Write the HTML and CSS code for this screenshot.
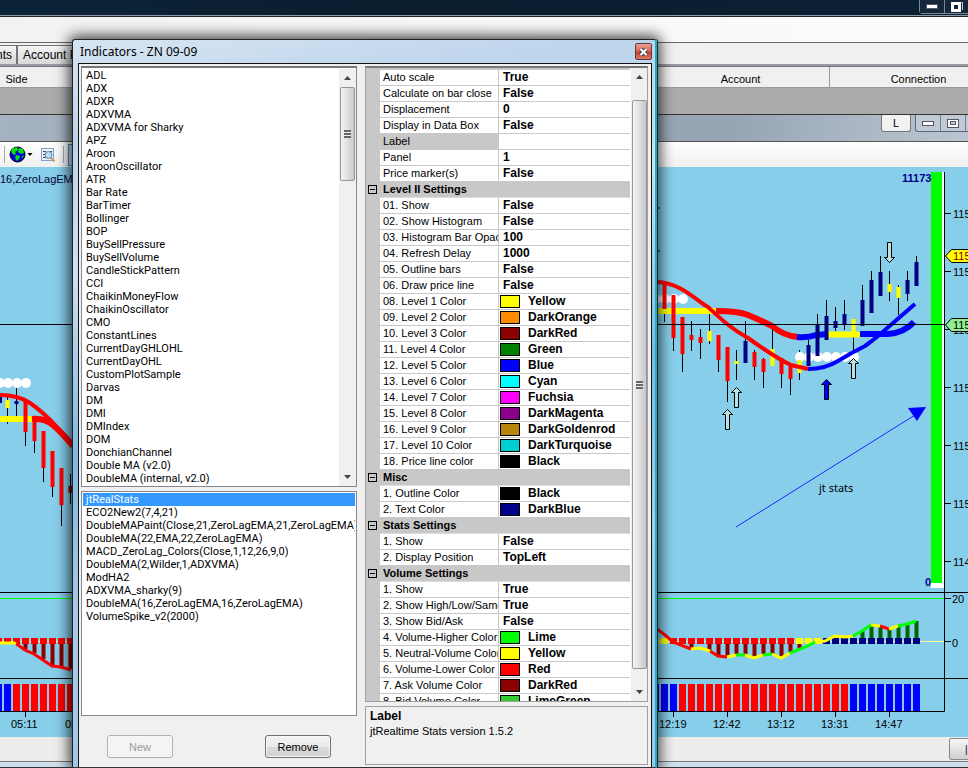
FILE: index.html
```html
<!DOCTYPE html>
<html lang="en">
<head>
    <meta charset="UTF-8">
    <meta name="viewport" content="width=device-width, initial-scale=1.0">
    <title>Indicators - ZN 09-09</title>
    <link rel="stylesheet" href="styles.css">
</head>
<body>
    <div class="desktop">
        <header class="app-title">
            <div class="app-buttons">
                <button aria-label="Minimize"><svg width="12" height="5"><rect x="0.5" y="0.5" width="11" height="4" fill="#fff" stroke="#556"/></svg></button>
                <button aria-label="Restore"><svg width="12" height="10"><path d="M4 0H11.500V8" fill="none" stroke="#ccc"/><rect x="1.500" y="1.500" width="7" height="7" fill="none" stroke="#fff" stroke-width="3"/></svg></button>
            </div>
        </header>
        <div class="menu-strip"></div>
        <nav class="tabs">
            <button class="tab tab-cut">nts</button>
            <button class="tab">Account Performance</button>
        </nav>
        <div class="columns">
            <div class="column column-side">Side</div>
            <div class="column column-fill"></div>
            <div class="column">Account</div>
            <div class="column">Connection</div>
        </div>
        <div class="empty-rows"></div>

        <div class="chart-title">
            <button class="link-button">L</button>
            <div class="chart-buttons">
                <button aria-label="Minimize chart"><svg width="12" height="5"><rect x="0.5" y="0.5" width="11" height="4" fill="#fff" stroke="#556"/></svg></button>
                <button aria-label="Maximize chart"><svg width="12" height="9"><rect x="0.5" y="0.5" width="11" height="8" fill="#fff" stroke="#556"/><rect x="3.500" y="2.500" width="5" height="3" fill="#bcd" stroke="#556"/></svg></button>
                <button aria-label="Close chart"></button>
            </div>
        </div>
        <div class="toolbar">
            <span class="tool-line"></span>
            <button class="tool" aria-label="Globe">
                <svg width="24" height="17" viewBox="0 0 24 17">
                    <circle cx="8.500" cy="8.500" r="7.500" fill="#0000e8" stroke="#000"/>
                    <path d="M3 3L8 1L9 4L6 6L7 8L5 9L2 6ZM10 2L14 3L15 7L12 8L9 6ZM7 9L11 10L10 13L8 15L6 12ZM13 10L15 9L13 13Z" fill="#00e800"/>
                    <path d="M18.500 7H23.500L21 10Z" fill="#000"/>
                </svg>
            </button>
            <button class="tool" aria-label="Data box">
                <svg width="16" height="16" viewBox="0 0 16 16">
                    <rect x="1.500" y="1.500" width="12" height="12" fill="#eef4fb" stroke="#7f9fc8"/>
                    <path d="M3 4.500H6M3 7.500H5M3 10.500H6M10 4.500H12" stroke="#445"/>
                    <path d="M11 11L14.500 14.500" stroke="#e09050" stroke-width="2"/>
                    <circle cx="8.500" cy="8" r="3.500" fill="#b8e0f5" stroke="#5a7ea8"/>
                </svg>
            </button>
            <span class="tool-line"></span>
            <button class="tool tool-active" aria-label="Indicators"></button>
        </div>

        <svg class="chart" viewBox="0 167 968 570" preserveAspectRatio="xMinYMin slice">
            <rect x="0" y="167" width="968" height="570" fill="#87ceeb"/>

            <!-- value bar -->
            <rect x="931" y="172" width="13" height="416" fill="#fff"/>
            <rect x="931" y="172" width="11" height="411" fill="#0f0"/>

            <!-- price panel -->
            <path class="wick" d="M7.500 395V424M16.500 388V417M25.500 403V446M34.500 418V453M43.500 431V482M52.500 451V497M61.500 468V526M70.500 474V504"/>
            <path class="wick" d="M664.500 283V322M673.500 295V351M682.500 317V372M691.500 321V351M700.500 329V359M709.500 314V344M718.500 335V372M727.500 347V402M736.500 350V380M745.500 321V363M754.500 350V380M763.500 358V388M772.500 329V366M781.500 358V388M790.500 365V395M799.500 350V380M808.500 340V366M817.500 314V356M826.500 300V340M835.500 307V331M844.500 300V330M853.500 319V351M862.500 285V326M871.500 271V313M880.500 256V296M889.500 271V301M898.500 285V315M907.500 271V301M916.500 256V286"/>
            <g fill="#fff">
                <circle cx="0" cy="383" r="5"/><circle cx="8" cy="383" r="5"/><circle cx="17" cy="383" r="5"/><circle cx="26" cy="383" r="5"/>
                <circle cx="656" cy="299" r="5"/><circle cx="665" cy="299" r="5"/><circle cx="674" cy="299" r="5"/><circle cx="683" cy="299" r="5"/>
                <circle cx="800" cy="357" r="5"/><circle cx="809" cy="357" r="5"/><circle cx="818" cy="357" r="5"/><circle cx="827" cy="357" r="5"/><circle cx="836" cy="357" r="5"/><circle cx="845" cy="357" r="5"/><circle cx="854" cy="357" r="5"/>
            </g>

            <path class="thick yellow" d="M0 419H33M657 311H717M828 334.500H861"/>
            <path class="thick red" d="M32 419Q45 418 53 425T73 446M716 311Q738 311 748 315T772 326Q784 336 798 337"/>
            <path class="thick blue" d="M797 337Q808 338 816 335L828 334M860 334H888Q904 333 914 322"/>

            <path class="candle red" d="M25.500 402V432M34.500 418V441M43.500 431V468M52.500 451V487M61.500 468V505M664.500 283V309M673.500 295V338M682.500 317V354M691.500 335V340M700.500 337V343M718.500 335V360M727.500 347V381M754.500 352V367M763.500 359V372M781.500 358V374M790.500 365V379"/>
            <path class="candle navy" d="M0 396V403M16.500 401V404M745.500 341V363M808.500 345V366M817.500 325V356M826.500 316V340M835.500 321V328M844.500 314V325M862.500 300V326M871.500 280V313M880.500 272V296M907.500 280V294M916.500 262V286"/>
            <path class="candle yellow" d="M7.500 400V408M709.500 331V341M736.500 361V364M772.500 349V366M799.500 360V373M853.500 319V333M889.500 284V292M898.500 287V298"/>
            <path class="candle darkred" d="M70.500 486V493"/>

            <path class="thin red" d="M0 395Q18 395 30 403T57 427L73 444M657 282C682 283 698 302 708 307C720 318 730 328 748 338Q776 358 791 365L808 369"/>
            <path class="thin blue" d="M808 369Q825 369 838 361T865 346Q872 341 878 336L915 304"/>
            <path class="axis" d="M0 324.500H944"/>

            <!-- entry arrows -->
            <g class="entry">
                <path d="M727.500 409.500L732.500 414.500H729.500V429.500H725.500V414.500H722.500Z"/>
                <path d="M736.500 387.500L741.500 392.500H738.500V407.500H734.500V392.500H731.500Z"/>
                <path d="M853.500 358.500L858.500 363.500H855.500V378.500H851.500V363.500H848.500Z"/>
                <path d="M889.500 262.500L894.500 257.500H891.500V242.500H887.500V257.500H884.500Z"/>
                <path fill="#00f" d="M826.500 379.500L831.500 384.500H828.500V399.500H824.500V384.500H821.500Z"/>
            </g>
            <path d="M736 527L915 415" stroke="#22f"/>
            <path d="M908 408L926 407L917 421Z" fill="#00f"/>
            <path class="wick" d="M657 208H660M657 251H660"/>

            <!-- momentum panel -->
            <path d="M0 598.500H944" stroke="#0f0"/>
            <path d="M0 641.500H944" stroke="#ffffa0"/>
            <path class="bar maroon" d="M25.500 644V649M34.500 644V653M43.500 644V659M52.500 644V665M61.500 644V667M70.500 644V669M691.500 644V649M709.500 644V650M718.500 644V655M727.500 644V656M736.500 644V655M745.500 644V655M754.500 644V657M763.500 644V655M772.500 644V654M781.500 644V657M790.500 644V653M799.500 644V649"/>
            <path class="bar green" d="M862.500 638V631M871.500 638V626M880.500 638V627M889.500 638V629M898.500 638V627M907.500 638V625M916.500 638V621"/>
            <path d="M-5 641H73M670 641H795" class="squares red"/>
            <path d="M652 641H668M796 641H822" class="squares yellow"/>
            <path d="M823 641H920" class="squares navy"/>
            <path class="trend red" d="M15 643L25 650L34 654L43 660L52 666L61 667L71 670M657 629L665 635L673 642L691 649M710 651L718 656L727 657M880 626L889 629"/>
            <path class="trend yellow" d="M0 643H14L16 644M691 649L700 648L710 651M727 657L736 655M745 655L754 658L763 655M772 654L781 658L790 653M815 642L825 641L835 636L845 637L853 636M871 625L880 626M889 629L898 626"/>
            <path class="trend lime" d="M736 655H745M763 655L772 654M790 653L808 646L815 642M853 636L862 631L871 625M898 626L907 624L916 621"/>

            <!-- trend blocks -->
            <path class="blocks blue" d="M-5 697.500H12M652 697.500H678M850 697.500H920"/>
            <path class="blocks red" d="M13 697.500H74M679 697.500H849"/>

            <path class="axis" d="M944.500 172V711.500H0M0 592.500H968M0 678.500H968M945 213.500H951M945 271.500H951M945 329.500H951M945 387.500H951M945 445.500H951M945 503.500H951M945 561.500H951M945 598.500H951M945 641.500H951M25.500 711V717M673.500 711V717M727.500 711V717M781.500 711V717M835.500 711V717M889.500 711V717"/>

            <g class="label">
                <text x="0" y="183" fill="#003">16,ZeroLagEMA</text>
                <text x="953" y="218">115</text>
                <text x="953" y="276">115</text>
                <text x="953" y="334">115</text>
                <text x="953" y="392">115</text>
                <text x="953" y="450">115</text>
                <text x="953" y="508">115</text>
                <text x="953" y="566">114</text>
                <text x="952" y="603">20</text>
                <text x="952" y="647">0</text>
                <text x="11" y="728">05:11</text>
                <text x="65" y="728">05:34</text>
                <text x="659" y="728">12:19</text>
                <text x="713" y="728">12:42</text>
                <text x="767" y="728">13:12</text>
                <text x="821" y="728">13:31</text>
                <text x="875" y="728">14:47</text>
            </g>
            <path d="M945.500 256L951.500 249.500H975V262.500H951.500Z" fill="#ff0" stroke="#000"/>
            <path d="M945.500 325L951.500 318.500H975V331.500H951.500Z" fill="#90ee90" stroke="#000"/>
            <text class="label" x="953" y="260" fill="#800000">115</text>
            <text class="label" x="953" y="329">115</text>
            <text class="label total" x="902" y="182">11173</text>
            <text class="label total" x="925" y="586">0</text>
            <text class="note" x="819" y="492">jt stats</text>
        </svg>

        <div class="chart-scroll">
            <button class="chart-thumb" aria-label="Scroll chart">|||</button>
        </div>
        <div class="chart-frame"></div>
    </div>

    <div class="dialog" role="dialog" aria-labelledby="dialogTitle">
        <div class="dialog-title">
            <span id="dialogTitle">Indicators - ZN 09-09</span>
            <button class="close" aria-label="Close"><svg width="9" height="8" viewBox="0 0 9 8"><path d="M1.500 1L7.500 7M7.500 1L1.500 7" stroke="#445" stroke-width="4"/><path d="M1.500 1L7.500 7M7.500 1L1.500 7" stroke="#fff" stroke-width="2"/></svg></button>
        </div>
        <div class="dialog-body">
            <div class="left-pane">
                <div class="list-box available">
                    <select class="list" size="32" aria-label="Available indicators">
                        <option>ADL</option>
                        <option>ADX</option>
                        <option>ADXR</option>
                        <option>ADXVMA</option>
                        <option>ADXVMA for Sharky</option>
                        <option>APZ</option>
                        <option>Aroon</option>
                        <option>AroonOscillator</option>
                        <option>ATR</option>
                        <option>Bar Rate</option>
                        <option>BarTimer</option>
                        <option>Bollinger</option>
                        <option>BOP</option>
                        <option>BuySellPressure</option>
                        <option>BuySellVolume</option>
                        <option>CandleStickPattern</option>
                        <option>CCI</option>
                        <option>ChaikinMoneyFlow</option>
                        <option>ChaikinOscillator</option>
                        <option>CMO</option>
                        <option>ConstantLines</option>
                        <option>CurrentDayGHLOHL</option>
                        <option>CurrentDayOHL</option>
                        <option>CustomPlotSample</option>
                        <option>Darvas</option>
                        <option>DM</option>
                        <option>DMI</option>
                        <option>DMIndex</option>
                        <option>DOM</option>
                        <option>DonchianChannel</option>
                        <option>Double MA (v2.0)</option>
                        <option>DoubleMA (internal, v2.0)</option>
                    </select>
                    <div class="scrollbar">
                        <button class="arrow" aria-label="Scroll up"><svg width="7" height="4"><path d="M0 4L3.500 0L7 4Z" fill="#444"/></svg></button>
                        <div class="thumb thumb-short"><span class="grip"></span></div>
                        <div class="track"></div>
                        <button class="arrow" aria-label="Scroll down"><svg width="7" height="4"><path d="M0 0L3.500 4L7 0Z" fill="#444"/></svg></button>
                    </div>
                </div>
                <div class="list-box chosen">
                    <select class="list" size="17" aria-label="Configured indicators">
                        <option selected>jtRealStats</option>
                        <option>ECO2New2(7,4,21)</option>
                        <option>DoubleMAPaint(Close,21,ZeroLagEMA,21,ZeroLagEMA)</option>
                        <option>DoubleMA(22,EMA,22,ZeroLagEMA)</option>
                        <option>MACD_ZeroLag_Colors(Close,1,12,26,9,0)</option>
                        <option>DoubleMA(2,Wilder,1,ADXVMA)</option>
                        <option>ModHA2</option>
                        <option>ADXVMA_sharky(9)</option>
                        <option>DoubleMA(16,ZeroLagEMA,16,ZeroLagEMA)</option>
                        <option>VolumeSpike_v2(2000)</option>
                    </select>
                </div>
                <div class="actions">
                    <button class="btn" disabled>New</button>
                    <button class="btn">Remove</button>
                </div>
            </div>

            <div class="right-pane">
                <div class="grid-box">
                    <div class="grid-view">
                        <table class="grid">
                            <colgroup><col class="col-gutter"><col class="col-name"><col></colgroup>
                            <tbody>
                                <tr><td></td><th>Auto scale</th><td>True</td></tr>
                                <tr><td></td><th>Calculate on bar close</th><td>False</td></tr>
                                <tr><td></td><th>Displacement</th><td>0</td></tr>
                                <tr><td></td><th>Display in Data Box</th><td>False</td></tr>
                                <tr class="current"><td></td><th>Label</th><td></td></tr>
                                <tr><td></td><th>Panel</th><td>1</td></tr>
                                <tr><td></td><th>Price marker(s)</th><td>False</td></tr>
                                <tr class="group"><td><button class="toggle" aria-label="Collapse"></button></td><th colspan="2">Level II Settings</th></tr>
                                <tr><td></td><th>01. Show</th><td>False</td></tr>
                                <tr><td></td><th>02. Show Histogram</th><td>False</td></tr>
                                <tr><td></td><th>03. Histogram Bar Opacity</th><td>100</td></tr>
                                <tr><td></td><th>04. Refresh Delay</th><td>1000</td></tr>
                                <tr><td></td><th>05. Outline bars</th><td>False</td></tr>
                                <tr><td></td><th>06. Draw price line</th><td>False</td></tr>
                                <tr><td></td><th>08. Level 1 Color</th><td><span class="swatch bg-yellow"></span>Yellow</td></tr>
                                <tr><td></td><th>09. Level 2 Color</th><td><span class="swatch bg-darkorange"></span>DarkOrange</td></tr>
                                <tr><td></td><th>10. Level 3 Color</th><td><span class="swatch bg-darkred"></span>DarkRed</td></tr>
                                <tr><td></td><th>11. Level 4 Color</th><td><span class="swatch bg-green"></span>Green</td></tr>
                                <tr><td></td><th>12. Level 5 Color</th><td><span class="swatch bg-blue"></span>Blue</td></tr>
                                <tr><td></td><th>13. Level 6 Color</th><td><span class="swatch bg-cyan"></span>Cyan</td></tr>
                                <tr><td></td><th>14. Level 7 Color</th><td><span class="swatch bg-fuchsia"></span>Fuchsia</td></tr>
                                <tr><td></td><th>15. Level 8 Color</th><td><span class="swatch bg-darkmagenta"></span>DarkMagenta</td></tr>
                                <tr><td></td><th>16. Level 9 Color</th><td><span class="swatch bg-darkgoldenrod"></span>DarkGoldenrod</td></tr>
                                <tr><td></td><th>17. Level 10 Color</th><td><span class="swatch bg-darkturquoise"></span>DarkTurquoise</td></tr>
                                <tr><td></td><th>18. Price line color</th><td><span class="swatch bg-black"></span>Black</td></tr>
                                <tr class="group"><td><button class="toggle" aria-label="Collapse"></button></td><th colspan="2">Misc</th></tr>
                                <tr><td></td><th>1. Outline Color</th><td><span class="swatch bg-black"></span>Black</td></tr>
                                <tr><td></td><th>2. Text Color</th><td><span class="swatch bg-darkblue"></span>DarkBlue</td></tr>
                                <tr class="group"><td><button class="toggle" aria-label="Collapse"></button></td><th colspan="2">Stats Settings</th></tr>
                                <tr><td></td><th>1. Show</th><td>False</td></tr>
                                <tr><td></td><th>2. Display Position</th><td>TopLeft</td></tr>
                                <tr class="group"><td><button class="toggle" aria-label="Collapse"></button></td><th colspan="2">Volume Settings</th></tr>
                                <tr><td></td><th>1. Show</th><td>True</td></tr>
                                <tr><td></td><th>2. Show High/Low/Same</th><td>True</td></tr>
                                <tr><td></td><th>3. Show Bid/Ask</th><td>False</td></tr>
                                <tr><td></td><th>4. Volume-Higher Color</th><td><span class="swatch bg-lime"></span>Lime</td></tr>
                                <tr><td></td><th>5. Neutral-Volume Color</th><td><span class="swatch bg-yellow"></span>Yellow</td></tr>
                                <tr><td></td><th>6. Volume-Lower Color</th><td><span class="swatch bg-red"></span>Red</td></tr>
                                <tr><td></td><th>7. Ask Volume Color</th><td><span class="swatch bg-darkred"></span>DarkRed</td></tr>
                                <tr><td></td><th>8. Bid Volume Color</th><td><span class="swatch bg-limegreen"></span>LimeGreen</td></tr>
                            </tbody>
                        </table>
                    </div>
                    <div class="scrollbar">
                        <button class="arrow" aria-label="Scroll up"><svg width="7" height="4"><path d="M0 4L3.500 0L7 4Z" fill="#444"/></svg></button>
                        <div class="track track-end"></div>
                        <div class="thumb thumb-long"><span class="grip"></span></div>
                        <div class="track track-end"></div>
                        <button class="arrow" aria-label="Scroll down"><svg width="7" height="4"><path d="M0 0L3.500 4L7 0Z" fill="#444"/></svg></button>
                    </div>
                </div>
                <div class="help-box">
                    <strong>Label</strong>
                    <p>jtRealtime Stats version 1.5.2</p>
                </div>
            </div>
        </div>
    </div>
</body>
</html>
```

FILE: styles.css
```css
* {
    box-sizing: border-box;
}
body {
    margin: 0;
    position: relative;
    overflow: hidden;
    font-family: "Liberation Sans", Arial, sans-serif;
    font-size: 11px;
    color: #000;
    background: #f0f0f0;
}
button {
    font-family: inherit;
    font-size: inherit;
    padding: 0;
    color: #000;
}
svg {
    display: block;
}

/* application behind the dialog */
.app-title {
    height: 16px;
    display: flex;
    justify-content: flex-end;
    align-items: flex-start;
    background: linear-gradient(100deg, #0c2438, #0a1c2e 45%, #0c2136);
    border-bottom: 1px solid #8d98a3;
}
.app-buttons {
    display: flex;
    margin-right: -3px;
    height: 14px;
    border: 1px solid #7e8996;
    border-top: none;
    border-radius: 0 0 0 4px;
}
.app-buttons button {
    width: 25px;
    height: 13px;
    display: flex;
    justify-content: center;
    align-items: center;
    background: #15273a;
    border: none;
    border-right: 1px solid #7e8996;
}
.menu-strip {
    height: 27px;
    background: linear-gradient(90deg, #f2f2f2, #fcfcfc);
    border-top: 1px solid #222;
    border-bottom: 1px solid #666;
}
.tabs {
    height: 23px;
    display: flex;
    align-items: flex-end;
    background: #f0f0f0;
    border-bottom: 2px solid #9a98a4;
}
.tab {
    height: 19px;
    padding: 0 5px;
    font-size: 12px;
    background: linear-gradient(#f4f4f4, #d8d8d8);
    border: 1px solid #77727a;
    border-bottom: none;
}
.tab-cut {
    width: 17px;
    padding: 0 4px 0 0;
    display: flex;
    justify-content: flex-end;
    align-items: center;
    overflow: hidden;
    border-left: none;
}
.columns {
    height: 22px;
    display: flex;
    margin-right: -40px;
    background: #f0f0f0;
    border-top: 1px solid #777;
    border-bottom: 1px solid #999;
}
.column {
    width: 178px;
    line-height: 24px;
    text-align: center;
    border-right: 1px solid #999;
}
.column-side {
    width: 33px;
    border: none;
}
.column-fill {
    flex: 1;
}
.empty-rows {
    height: 27px;
    background: #ababab;
    border-bottom: 1px solid #333;
}
.chart-title {
    height: 27px;
    display: flex;
    justify-content: flex-end;
    gap: 4px;
    background: linear-gradient(100deg, #a5b2bf, #96a5b3 75%, #bcc6d2);
    border-bottom: 1px solid #555;
}
.link-button {
    width: 30px;
    height: 17px;
    background: #f2f2f2;
    border: 1px solid #777;
    border-top: none;
    border-radius: 0 0 3px 3px;
}
.chart-buttons {
    display: flex;
    margin-right: -24px;
    height: 17px;
    background: #bfcad6;
    border: 1px solid #5c6875;
    border-top: none;
    border-radius: 0 0 3px 3px;
}
.chart-buttons button {
    width: 25px;
    display: flex;
    justify-content: center;
    align-items: center;
    background: none;
    border: none;
    border-right: 1px solid #75818e;
}
.toolbar {
    height: 25px;
    padding: 0 4px;
    display: flex;
    align-items: center;
    gap: 4px;
    background: linear-gradient(#fefefe, #f0f0f0);
}
.tool-line {
    width: 1px;
    height: 17px;
    background: #aaa;
}
.tool {
    display: flex;
    margin-right: 3px;
    background: none;
    border: none;
}
.tool-active {
    width: 24px;
    height: 22px;
    background: #cfe4f8;
    border: 1px solid #3a8fe0;
}
.chart {
    width: 100%;
    height: 570px;
}
.axis, .wick, .thick, .thin, .candle, .bar, .trend, .squares, .blocks {
    fill: none;
}
.axis, .wick {
    stroke: #000;
}
.thick {
    stroke-width: 6;
}
.thin, .candle, .bar {
    stroke-width: 4;
}
.trend {
    stroke-width: 3;
}
.squares {
    stroke-width: 6;
    stroke-dasharray: 7 2;
}
.blocks {
    stroke-width: 27;
    stroke-dasharray: 7 2;
}
.entry {
    fill: #b8e2e2;
    stroke: #000;
}
.red {
    stroke: #f00;
}
.yellow {
    stroke: #ff0;
}
.blue {
    stroke: #00f;
}
.navy {
    stroke: #000080;
}
.maroon, .darkred {
    stroke: #8b0000;
}
.green {
    stroke: #006400;
}
.lime {
    stroke: #0f0;
}
.label {
    font-size: 11px;
}
.total {
    font-weight: bold;
    fill: #00008b;
}
.note {
    font-family: "Noto Sans", sans-serif;
    font-size: 11px;
}
.chart-scroll {
    height: 24px;
    padding-top: 1px;
    display: flex;
    justify-content: flex-end;
    background: #ededed;
}
.chart-thumb {
    width: 40px;
    height: 22px;
    margin-right: -21px;
    background: linear-gradient(#f8f8f8, #cfcfd3);
    border: 1px solid #888;
    border-radius: 2px;
    font-size: 10px;
}
.chart-frame {
    height: 7px;
    background: #cfdfeb;
    border-top: 1px solid #777;
    border-bottom: 1px solid #333;
}

/* indicators dialog */
.dialog {
    position: absolute;
    top: 39px;
    bottom: 0;
    left: 72px;
    width: 585px;
    padding: 0 3px 0 5px;
    display: flex;
    flex-direction: column;
    background: linear-gradient(170deg, #d7e5f2, #bdd4ec 12%, #cfe0f1 28%, #7fb8e0 50%, #a9cbe8 70%, #9cc6ea);
    border: 1px solid #222;
    border-right: 2px solid #12b4cc;
    border-bottom-color: #333;
    border-radius: 3px 3px 0 0;
    box-shadow: 1px 0 0 #222, 0 0 14px 3px rgba(0, 0, 0, 0.75);
}
.dialog-title {
    height: 23px;
    padding: 0 0 0 2px;
    display: flex;
    justify-content: space-between;
    align-items: center;
    font-family: "Noto Sans", "Open Sans", sans-serif;
    font-size: 12px;
}
.close {
    width: 17px;
    height: 17px;
    display: flex;
    justify-content: center;
    align-items: center;
    background: linear-gradient(#eaa592, #d8604a 50%, #c23a20 51%, #dd7a60);
    border: 1px solid #5a3a40;
    border-radius: 2px;
}
.dialog-body {
    flex: 1;
    min-height: 0;
    padding: 2px;
    display: flex;
    gap: 8px;
    background: #f0f0f0;
    border: 1px solid #111;
    border-bottom: none;
}
.left-pane {
    width: 276px;
    display: flex;
    flex-direction: column;
    gap: 4px;
}
.list-box {
    display: flex;
    background: #fff;
    border: 1px solid #828790;
}
.available {
    height: 421px;
    padding-top: 1px;
    border-top: 2px solid #777;
}
.chosen {
    height: 225px;
    padding: 1px;
}
.list {
    flex: 1;
    min-width: 0;
    height: auto;
    margin: 0;
    padding: 0;
    overflow: hidden;
    border: none;
    outline: none;
    border-radius: 0;
    background: #fff;
    font-family: Roboto, "Liberation Sans", sans-serif;
    font-size: 11px;
    color: #000;
}
.list option {
    min-height: 13px;
    height: 13px;
    padding: 0 0 0 3px;
    line-height: 13px;
}
.list option:checked {
    background: #39f linear-gradient(#39f, #39f);
    color: #fff;
    -webkit-text-fill-color: #fff;
}
.available .list option {
    padding-left: 4px;
}
.scrollbar {
    width: 17px;
    display: flex;
    flex-direction: column;
    align-items: center;
    background: #f0f0f0;
}
.arrow {
    width: 16px;
    height: 18px;
    display: flex;
    justify-content: center;
    align-items: center;
    background: none;
    border: none;
}
.thumb {
    width: 15px;
    display: flex;
    justify-content: center;
    align-items: center;
    background: linear-gradient(90deg, #f4f4f4, #e0e0e2 50%, #c6c6cc);
    border: 1px solid #979797;
    border-radius: 2px;
}
.thumb-short {
    height: 94px;
}
.thumb-long {
    flex: 1;
}
.grip {
    width: 7px;
    height: 8px;
    background: repeating-linear-gradient(#666 0 2px, #eee 2px 3px);
}
.track {
    flex: 1;
}
.track-end {
    flex: none;
    height: 14px;
}
.actions {
    padding: 15px 26px 0 26px;
    display: flex;
    justify-content: space-between;
}
.btn {
    width: 66px;
    height: 23px;
    background: linear-gradient(#f3f3f3, #ebebeb 50%, #dcdcdc 51%, #cfcfcf);
    border: 1px solid #707070;
    border-radius: 3px;
    box-shadow: inset 0 0 0 1px #f8f8f8;
}
.btn:disabled {
    color: #999;
    background: #f4f4f4;
    border-color: #adb2b5;
}
.right-pane {
    flex: 1;
    min-width: 0;
    margin-right: 1px;
    display: flex;
    flex-direction: column;
    gap: 4px;
}
.grid-box {
    flex: 1;
    min-height: 0;
    display: flex;
    border: 1px solid #a0a0a0;
    border-top: 2px solid #777;
}
.grid-box .scrollbar {
    width: 16px;
}
.grid-view {
    flex: 1;
    min-width: 0;
    padding-top: 2px;
    overflow: hidden;
    background: #c8c8c8;
    border-right: 1px solid #fff;
}
.grid {
    width: 100%;
    table-layout: fixed;
    border-collapse: separate;
    border-spacing: 0;
    background: #fff;
}
.col-gutter {
    width: 14px;
}
.col-name {
    width: 119px;
}
.grid td, .grid th {
    height: 16px;
    padding: 0 0 0 4px;
    overflow: hidden;
    white-space: nowrap;
    line-height: 15px;
    text-align: left;
    border-bottom: 1px solid #c8c8c8;
}
.grid th {
    padding-left: 3px;
    font-weight: normal;
    border-right: 1px solid #c8c8c8;
}
.grid td {
    font-size: 12px;
    font-weight: bold;
}
.grid td:first-child {
    padding: 0 0 0 2px;
    background: #c8c8c8;
}
.grid .current th {
    background: #c8c8c8;
}
.grid .group th {
    background: #c8c8c8;
    font-weight: bold;
    border-bottom-color: #ddd;
}
.toggle {
    display: block;
    width: 9px;
    height: 9px;
    background: linear-gradient(#000, #000) center / 5px 1px no-repeat;
    border: 1px solid #000;
}
.swatch {
    display: inline-block;
    width: 20px;
    height: 13px;
    margin: 1px 8px 0 -3px;
    vertical-align: top;
    border: 1px solid #000;
}
.bg-yellow { background: yellow; }
.bg-darkorange { background: darkorange; }
.bg-darkred { background: darkred; }
.bg-green { background: green; }
.bg-blue { background: blue; }
.bg-cyan { background: cyan; }
.bg-fuchsia { background: fuchsia; }
.bg-darkmagenta { background: darkmagenta; }
.bg-darkgoldenrod { background: darkgoldenrod; }
.bg-darkturquoise { background: darkturquoise; }
.bg-black { background: black; }
.bg-darkblue { background: darkblue; }
.bg-lime { background: lime; }
.bg-red { background: red; }
.bg-limegreen { background: limegreen; }
.help-box {
    height: 59px;
    padding: 2px 4px;
    line-height: 15px;
    border: 1px solid #a0a0a0;
}
.help-box strong {
    font-size: 12px;
}
.help-box p {
    margin: 0;
}
```
